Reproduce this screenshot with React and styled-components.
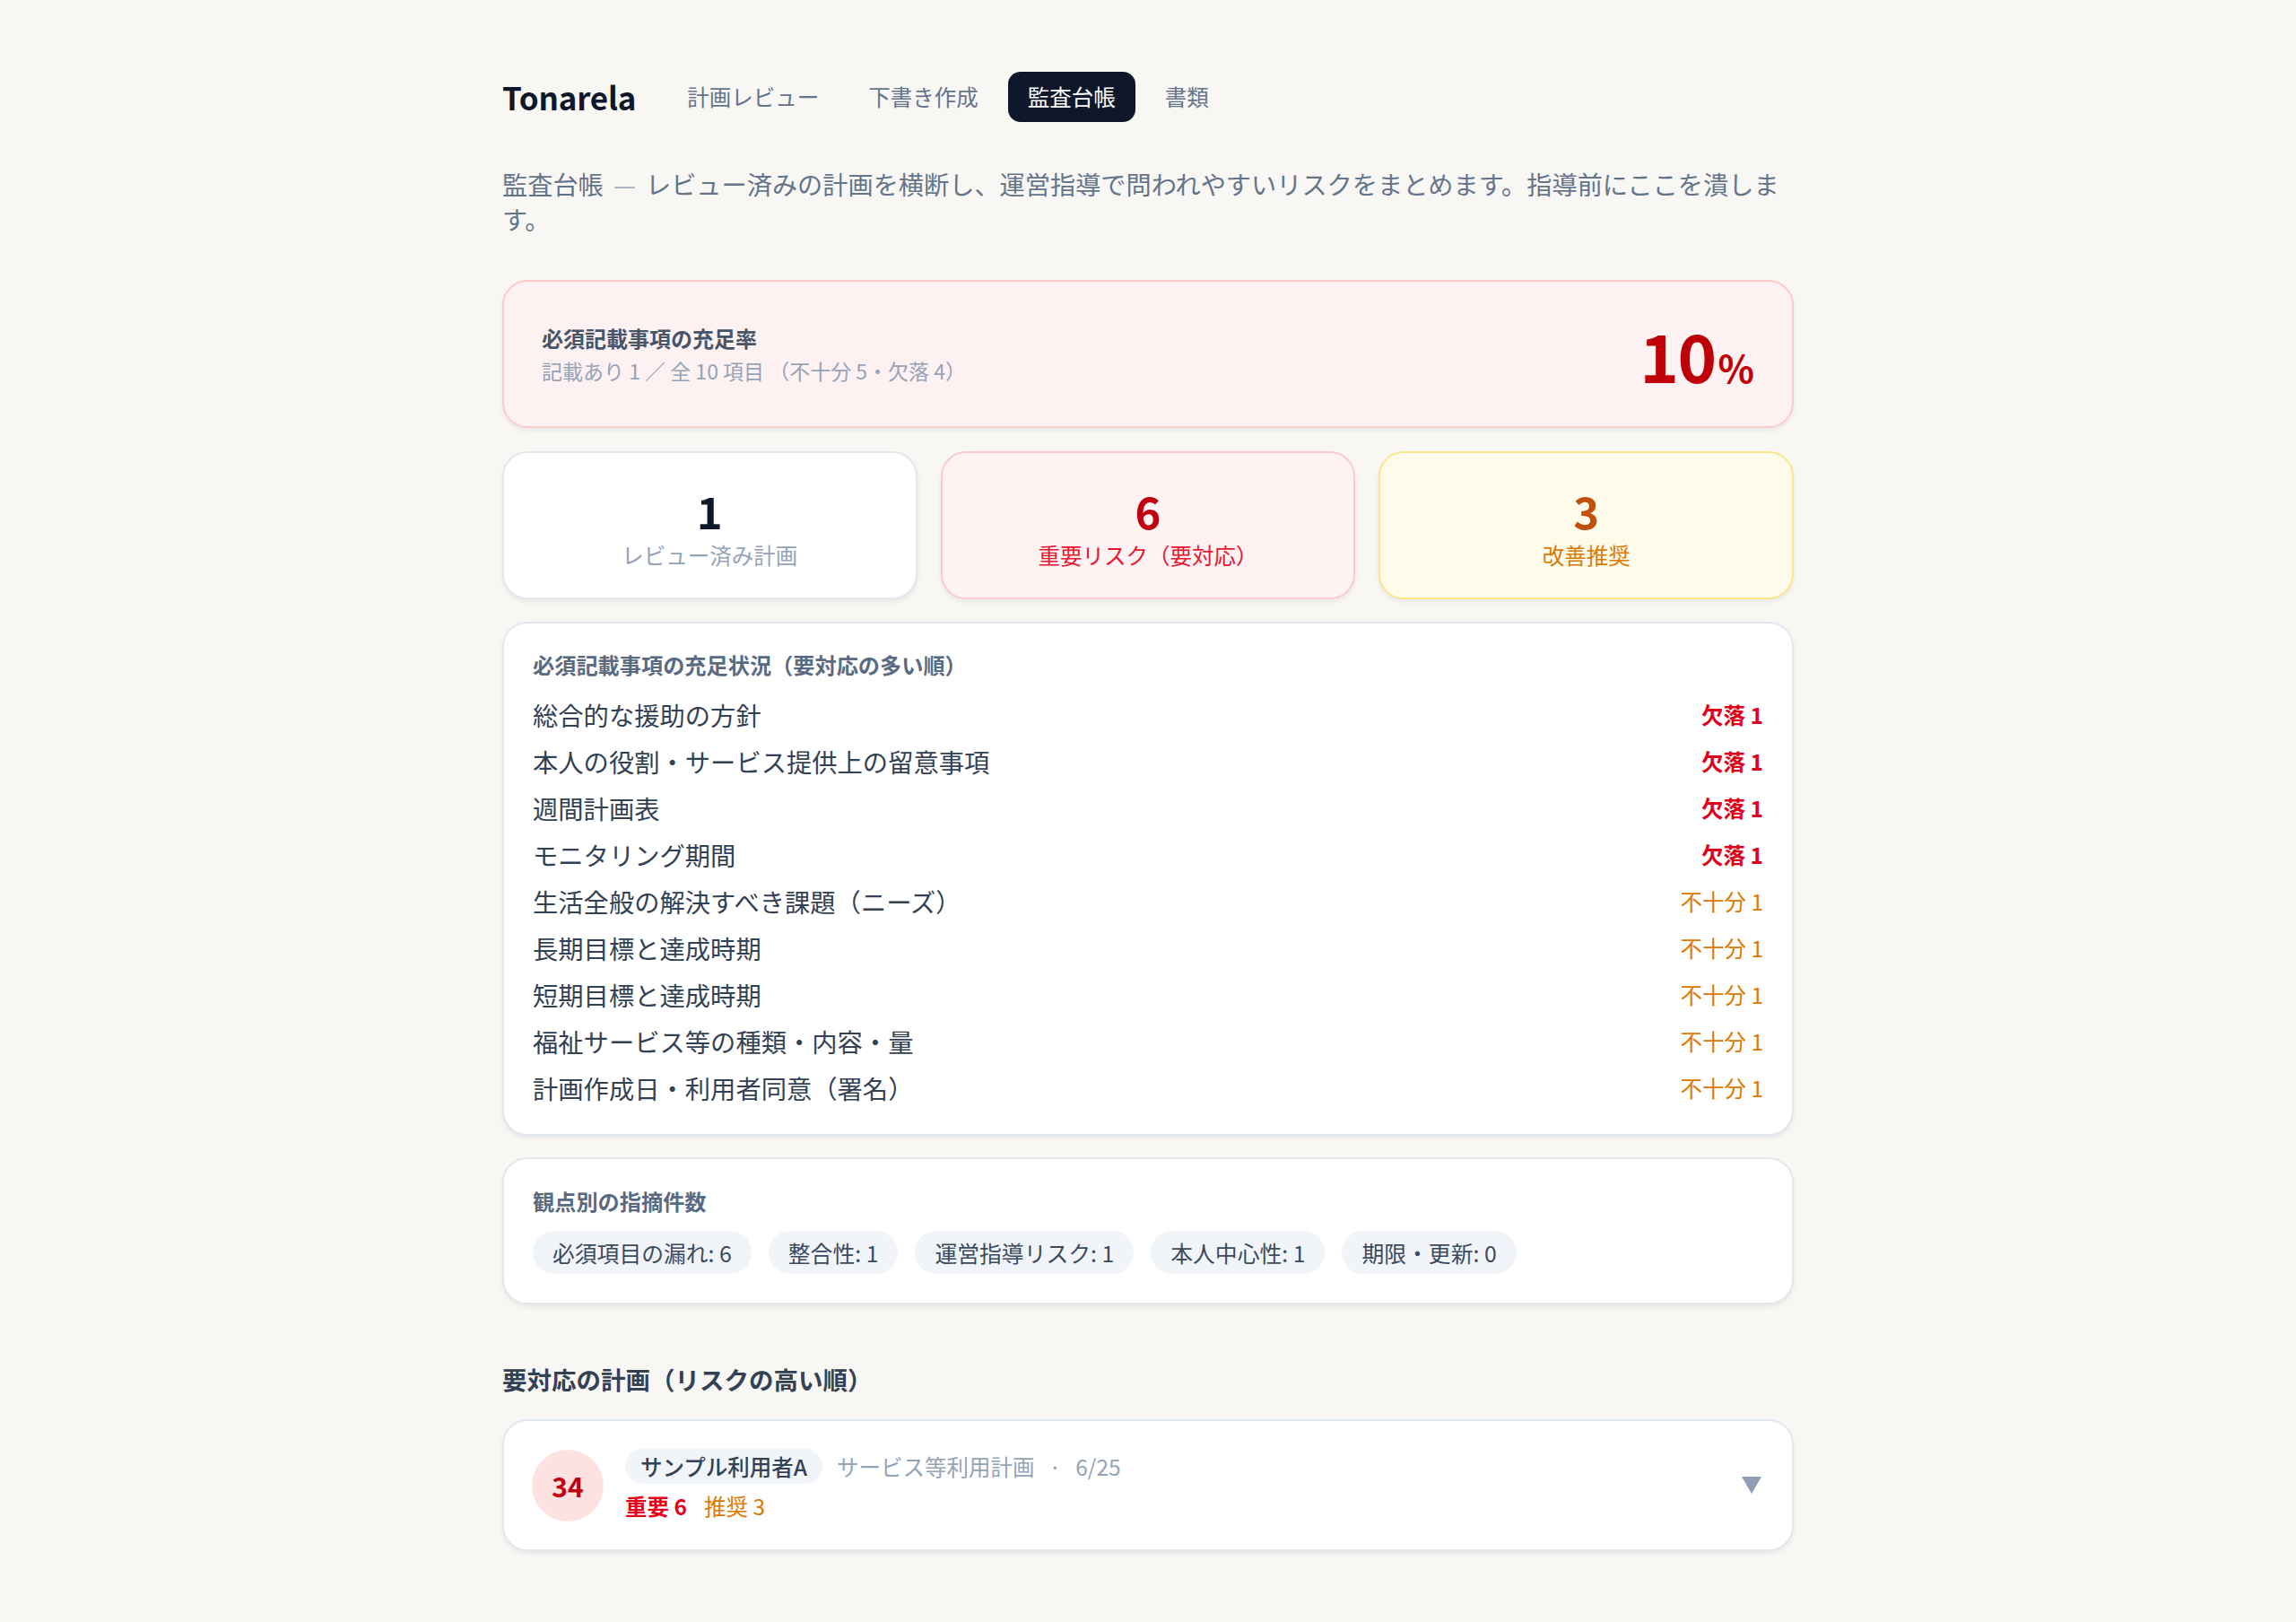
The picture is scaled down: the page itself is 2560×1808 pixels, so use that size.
import React from 'react';
import styled, { createGlobalStyle } from 'styled-components';

const GlobalStyle = createGlobalStyle`
  html, body {
    margin: 0;
    padding: 0;
    background: #f8f7f4;
  }
  body {
    font-family: "Noto Sans CJK JP", "Noto Sans", sans-serif;
    color: #334155;
  }
  * { box-sizing: border-box; }
`;

const items = [
  { name: '総合的な援助の方針', kind: 'missing', count: 1 },
  { name: '本人の役割・サービス提供上の留意事項', kind: 'missing', count: 1 },
  { name: '週間計画表', kind: 'missing', count: 1 },
  { name: 'モニタリング期間', kind: 'missing', count: 1 },
  { name: '生活全般の解決すべき課題（ニーズ）', kind: 'weak', count: 1 },
  { name: '長期目標と達成時期', kind: 'weak', count: 1 },
  { name: '短期目標と達成時期', kind: 'weak', count: 1 },
  { name: '福祉サービス等の種類・内容・量', kind: 'weak', count: 1 },
  { name: '計画作成日・利用者同意（署名）', kind: 'weak', count: 1 },
];

const viewpoints = [
  ['必須項目の漏れ', 6],
  ['整合性', 1],
  ['運営指導リスク', 1],
  ['本人中心性', 1],
  ['期限・更新', 0],
];

const tones = {
  plain: { bg: '#ffffff', border: '#e2e8f0', num: '#0f172a', label: '#94a3b8' },
  danger: { bg: '#fef2f2', border: '#fecaca', num: '#c00010', label: '#e8162e' },
  warn: { bg: '#fefbea', border: '#fde68a', num: '#c2500c', label: '#dc7a06' },
};

let App = () => {
  return (
    <Page>
      <GlobalStyle />
      <Nav>
        <Brand>Tonarela</Brand>
        <NavLink>計画レビュー</NavLink>
        <NavLink>下書き作成</NavLink>
        <NavLink $active>監査台帳</NavLink>
        <NavLink>書類</NavLink>
      </Nav>

      <Intro>
        監査台帳<Dash>—</Dash>レビュー済みの計画を横断し、運営指導で問われやすいリスクをまとめます。指導前にここを潰します。
      </Intro>

      <Summary>
        <div>
          <SummaryTitle>必須記載事項の充足率</SummaryTitle>
          <SummarySub>記載あり 1 ／ 全 10 項目 （不十分 5・欠落 4）</SummarySub>
        </div>
        <Rate>10<Pct>%</Pct></Rate>
      </Summary>

      <StatGrid>
        <StatCard $tone="plain">
          <StatNum $tone="plain">1</StatNum>
          <StatLabel $tone="plain">レビュー済み計画</StatLabel>
        </StatCard>
        <StatCard $tone="danger">
          <StatNum $tone="danger">6</StatNum>
          <StatLabel $tone="danger">重要リスク（要対応）</StatLabel>
        </StatCard>
        <StatCard $tone="warn">
          <StatNum $tone="warn">3</StatNum>
          <StatLabel $tone="warn">改善推奨</StatLabel>
        </StatCard>
      </StatGrid>

      <Card $pt={29} $pb={25.5} $mb={24}>
        <CardTitle $mb={12.5}>必須記載事項の充足状況（要対応の多い順）</CardTitle>
        {items.map((x) => (
          <Row key={x.name}>
            <span>{x.name}</span>
            <Status $kind={x.kind}>{x.kind === 'missing' ? '欠落' : '不十分'} {x.count}</Status>
          </Row>
        ))}
      </Card>

      <Card $pt={30} $pb={32} $mb={0}>
        <CardTitle $mb={16.5}>観点別の指摘件数</CardTitle>
        <Chips>
          {viewpoints.map(([k, v]) => (
            <Chip key={k}>{k}: {v}</Chip>
          ))}
        </Chips>
      </Card>

      <SectionHeading>要対応の計画（リスクの高い順）</SectionHeading>

      <PlanCard>
        <Score>34</Score>
        <PlanInfo>
          <Meta>
            <NameChip>サンプル利用者A</NameChip>
            <MetaText>サービス等利用計画</MetaText>
            <MetaText>·</MetaText>
            <MetaText>6/25</MetaText>
          </Meta>
          <Counts>
            <Critical>重要 6</Critical>
            <Advice>推奨 3</Advice>
          </Counts>
        </PlanInfo>
        <svg width="22" height="19" viewBox="0 0 22 19">
          <polygon points="0,0 22,0 11,19" fill="#8e9db4" />
        </svg>
      </PlanCard>
    </Page>
  );
};

const Page = styled.div`
  width: 1440px;
  margin: 0 auto;
  padding: 80px 0 80px;
`;

const Nav = styled.nav`
  display: flex;
  align-items: center;
  gap: 11px;
  margin-bottom: 49px;
`;

const Brand = styled.div`
  font-size: 35px;
  font-weight: 700;
  line-height: 56px;
  color: #0f172a;
  margin-right: 24px;
  letter-spacing: -0.2px;
`;

const NavLink = styled.a`
  font-size: 24.5px;
  line-height: 32px;
  padding: 12px 22px;
  border-radius: 14px;
  color: ${(props) => (props.$active ? '#ffffff' : '#64748b')};
  background: ${(props) => (props.$active ? '#0f172a' : 'transparent')};
  cursor: pointer;
`;

const Intro = styled.p`
  margin: 0 0 48.5px;
  font-size: 28.2px;
  line-height: 39.4px;
  color: #64748b;
`;

const Dash = styled.span`
  display: inline-block;
  color: #a3afbf;
  margin: 0 11px;
`;

const Summary = styled.div`
  display: flex;
  justify-content: space-between;
  align-items: center;
  padding: 40px 42px;
  margin-bottom: 26px;
  background: #fef1f1;
  border: 2px solid #fecaca;
  border-radius: 28px;
  box-shadow: 0 3px 5px rgba(15, 23, 42, 0.07);
`;

const SummaryTitle = styled.div`
  font-size: 24px;
  font-weight: 700;
  line-height: 34px;
  color: #475569;
  margin-bottom: 3px;
`;

const SummarySub = styled.div`
  font-size: 23px;
  line-height: 32px;
  color: #94a3b8;
`;

const Rate = styled.div`
  font-size: 74px;
  font-weight: 700;
  line-height: 81px;
  color: #c00008;
  letter-spacing: -1.5px;
`;

const Pct = styled.span`
  font-size: 42px;
  line-height: 1;
  letter-spacing: 0;
  margin-left: 3px;
`;

const StatGrid = styled.div`
  display: grid;
  grid-template-columns: repeat(3, 1fr);
  gap: 26px;
  margin-bottom: 24.5px;
`;

const StatCard = styled.div`
  display: flex;
  flex-direction: column;
  align-items: center;
  padding: 36px 0 30.5px;
  background: ${(props) => tones[props.$tone].bg};
  border: 2px solid ${(props) => tones[props.$tone].border};
  border-radius: 28px;
  box-shadow: 0 3px 5px rgba(15, 23, 42, 0.07);
`;

const StatNum = styled.div`
  font-size: 49px;
  font-weight: 700;
  line-height: 56px;
  color: ${(props) => tones[props.$tone].num};
  margin-bottom: 4.5px;
`;

const StatLabel = styled.div`
  font-size: 24.5px;
  line-height: 34px;
  color: ${(props) => tones[props.$tone].label};
`;

const Card = styled.div`
  padding: ${(props) => props.$pt}px 32px ${(props) => props.$pb}px;
  margin-bottom: ${(props) => props.$mb}px;
  background: #ffffff;
  border: 2px solid #e2e8f0;
  border-radius: 28px;
  box-shadow: 0 3px 5px rgba(15, 23, 42, 0.07);
`;

const CardTitle = styled.div`
  font-size: 24.2px;
  font-weight: 700;
  line-height: 34px;
  color: #5a6a82;
  margin-bottom: ${(props) => props.$mb}px;
`;

const Row = styled.div`
  display: flex;
  justify-content: space-between;
  align-items: center;
  height: 52px;
  font-size: 28.3px;
  color: #334155;
`;

const Status = styled.span`
  font-size: 24.5px;
  font-weight: ${(props) => (props.$kind === 'missing' ? 700 : 400)};
  color: ${(props) => (props.$kind === 'missing' ? '#e0001b' : '#e07800')};
`;

const Chips = styled.div`
  display: flex;
  flex-wrap: wrap;
  gap: 19px;
`;

const Chip = styled.span`
  font-size: 24.8px;
  line-height: 34px;
  padding: 7px 22px;
  border-radius: 999px;
  background: #f1f5f9;
  color: #3b4a5e;
`;

const SectionHeading = styled.h2`
  margin: 63px 0 25px;
  font-size: 27.5px;
  font-weight: 700;
  line-height: 40px;
  color: #334155;
`;

const PlanCard = styled.div`
  display: flex;
  align-items: center;
  gap: 24px;
  padding: 31px 34px 31px 31px;
  background: #ffffff;
  border: 2px solid #e2e8f0;
  border-radius: 28px;
  box-shadow: 0 3px 5px rgba(15, 23, 42, 0.07);
`;

const Score = styled.div`
  flex: none;
  width: 80px;
  height: 80px;
  border-radius: 50%;
  background: #fee2e2;
  color: #c00010;
  font-size: 30px;
  font-weight: 700;
  display: flex;
  align-items: center;
  justify-content: center;
`;

const PlanInfo = styled.div`
  flex: 1;
  display: flex;
  flex-direction: column;
  gap: 8px;
`;

const Meta = styled.div`
  display: flex;
  align-items: center;
  gap: 16px;
`;

const NameChip = styled.span`
  font-size: 24.5px;
  font-weight: 500;
  line-height: 33px;
  padding: 3px 17px;
  border-radius: 999px;
  background: #f1f5f9;
  color: #334155;
`;

const MetaText = styled.span`
  font-size: 24.5px;
  color: #94a3b8;
`;

const Counts = styled.div`
  display: flex;
  gap: 19px;
  font-size: 24.5px;
  line-height: 34px;
`;

const Critical = styled.span`
  font-weight: 700;
  color: #e8001a;
`;

const Advice = styled.span`
  color: #e07800;
`;

export default App;
